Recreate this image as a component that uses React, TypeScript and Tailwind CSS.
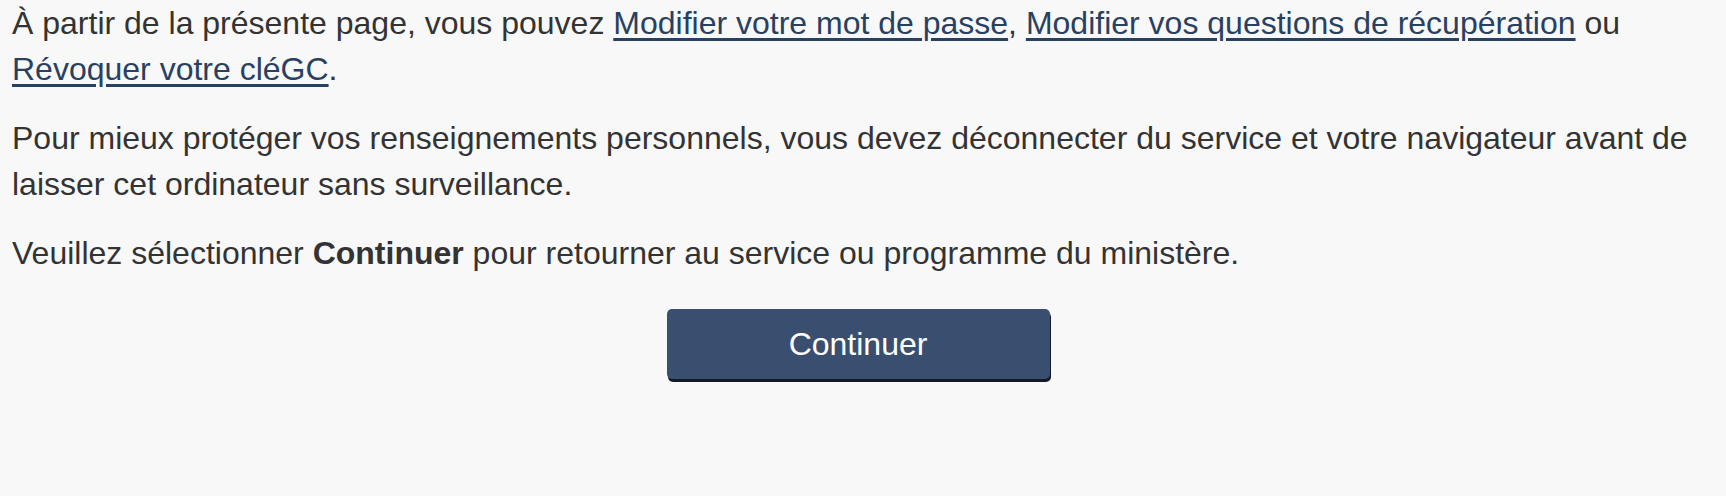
export default function App() {
  return (
    <div className="min-h-screen w-full bg-[#f8f8f8] pl-3 pr-[22px] text-[32px] leading-[46px] text-[#333333] font-['Liberation_Sans',Arial,sans-serif]">
      <p className="mb-[23px]">
        À partir de la présente page, vous pouvez{" "}
        <a href="#" className="text-[#284162] underline underline-offset-[4px]">
          Modifier votre mot de passe
        </a>
        ,{" "}
        <a href="#" className="text-[#284162] underline underline-offset-[4px]">
          Modifier vos questions de récupération
        </a>{" "}
        ou{" "}
        <a href="#" className="text-[#284162] underline underline-offset-[4px]">
          Révoquer votre cléGC
        </a>
        .
      </p>
      <p className="mb-[23px]">
        Pour mieux protéger vos renseignements personnels, vous devez déconnecter du service et
        votre navigateur avant de laisser cet ordinateur sans surveillance.
      </p>
      <p>
        Veuillez sélectionner <strong className="font-bold">Continuer</strong> pour retourner au
        service ou programme du ministère.
      </p>
      <div className="mt-[33px] flex justify-center">
        <button
          type="button"
          className="h-[70px] w-[383px] rounded-[5px] bg-[#3a4f6f] text-[32px] text-white shadow-[1px_3px_0_#151b26]"
        >
          Continuer
        </button>
      </div>
    </div>
  );
}
